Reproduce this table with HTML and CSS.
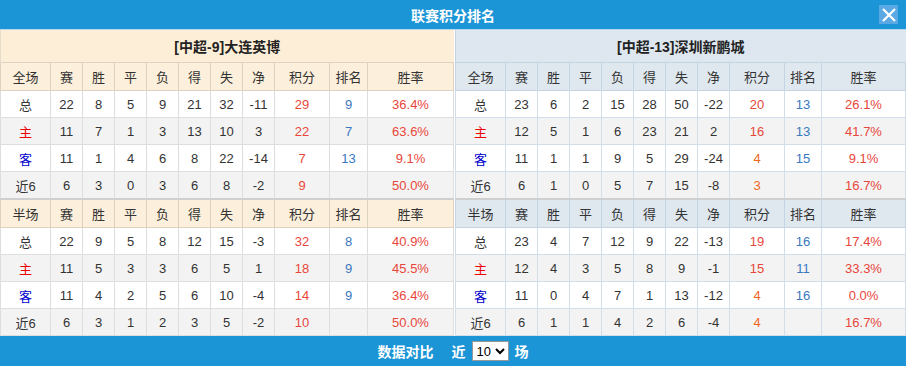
FILE: index.html
```html
<!DOCTYPE html>
<html lang="zh-CN">

<head>
    <meta charset="UTF-8">
    <title>联赛积分排名</title>
    <link rel="stylesheet" href="styles.css">
</head>

<body>
    <div class="dialog">
        <div class="dlg-head">
            <span class="dlg-title">联赛积分排名</span>
            <a class="dlg-close" href="#">
                <svg width="14" height="14" viewBox="0 0 14 14">
                    <path d="M1 1 L13 13 M13 1 L1 13" stroke="#fff" stroke-width="2.2" />
                </svg>
            </a>
        </div>

        <div class="teams">
            <table class="standings home">
                <colgroup>
                    <col style="width:50px"><col style="width:32px"><col style="width:32px"><col style="width:32px">
                    <col style="width:32px"><col style="width:32px"><col style="width:32px"><col style="width:32px">
                    <col style="width:55px"><col style="width:38px"><col>
                </colgroup>
                <tr class="team-row"><th colspan="11">[中超-9]大连英博</th></tr>
                <tr class="head-row">
                    <td>全场</td><td>赛</td><td>胜</td><td>平</td><td>负</td><td>得</td><td>失</td><td>净</td><td>积分</td><td>排名</td><td>胜率</td>
                </tr>
                <tr><td>总</td><td>22</td><td>8</td><td>5</td><td>9</td><td>21</td><td>32</td><td>-11</td><td class="pt">29</td><td class="rk">9</td><td class="rate">36.4%</td></tr>
                <tr class="alt"><td class="zhu">主</td><td>11</td><td>7</td><td>1</td><td>3</td><td>13</td><td>10</td><td>3</td><td class="pt">22</td><td class="rk">7</td><td class="rate">63.6%</td></tr>
                <tr><td class="ke">客</td><td>11</td><td>1</td><td>4</td><td>6</td><td>8</td><td>22</td><td>-14</td><td class="pt">7</td><td class="rk">13</td><td class="rate">9.1%</td></tr>
                <tr class="alt"><td>近6</td><td>6</td><td>3</td><td>0</td><td>3</td><td>6</td><td>8</td><td>-2</td><td class="pt">9</td><td class="rk"></td><td class="rate">50.0%</td></tr>
                <tr class="head-row half">
                    <td>半场</td><td>赛</td><td>胜</td><td>平</td><td>负</td><td>得</td><td>失</td><td>净</td><td>积分</td><td>排名</td><td>胜率</td>
                </tr>
                <tr><td>总</td><td>22</td><td>9</td><td>5</td><td>8</td><td>12</td><td>15</td><td>-3</td><td class="pt">32</td><td class="rk">8</td><td class="rate">40.9%</td></tr>
                <tr class="alt"><td class="zhu">主</td><td>11</td><td>5</td><td>3</td><td>3</td><td>6</td><td>5</td><td>1</td><td class="pt">18</td><td class="rk">9</td><td class="rate">45.5%</td></tr>
                <tr><td class="ke">客</td><td>11</td><td>4</td><td>2</td><td>5</td><td>6</td><td>10</td><td>-4</td><td class="pt">14</td><td class="rk">9</td><td class="rate">36.4%</td></tr>
                <tr class="alt"><td>近6</td><td>6</td><td>3</td><td>1</td><td>2</td><td>3</td><td>5</td><td>-2</td><td class="pt">10</td><td class="rk"></td><td class="rate">50.0%</td></tr>
            </table>

            <table class="standings away">
                <colgroup>
                    <col style="width:50px"><col style="width:32px"><col style="width:32px"><col style="width:32px">
                    <col style="width:32px"><col style="width:32px"><col style="width:32px"><col style="width:32px">
                    <col style="width:55px"><col style="width:37px"><col>
                </colgroup>
                <tr class="team-row"><th colspan="11">[中超-13]深圳新鹏城</th></tr>
                <tr class="head-row">
                    <td>全场</td><td>赛</td><td>胜</td><td>平</td><td>负</td><td>得</td><td>失</td><td>净</td><td>积分</td><td>排名</td><td>胜率</td>
                </tr>
                <tr><td>总</td><td>23</td><td>6</td><td>2</td><td>15</td><td>28</td><td>50</td><td>-22</td><td class="pt">20</td><td class="rk">13</td><td class="rate">26.1%</td></tr>
                <tr class="alt"><td class="zhu">主</td><td>12</td><td>5</td><td>1</td><td>6</td><td>23</td><td>21</td><td>2</td><td class="pt">16</td><td class="rk">13</td><td class="rate">41.7%</td></tr>
                <tr><td class="ke">客</td><td>11</td><td>1</td><td>1</td><td>9</td><td>5</td><td>29</td><td>-24</td><td class="pt low">4</td><td class="rk">15</td><td class="rate">9.1%</td></tr>
                <tr class="alt"><td>近6</td><td>6</td><td>1</td><td>0</td><td>5</td><td>7</td><td>15</td><td>-8</td><td class="pt low">3</td><td class="rk"></td><td class="rate">16.7%</td></tr>
                <tr class="head-row half">
                    <td>半场</td><td>赛</td><td>胜</td><td>平</td><td>负</td><td>得</td><td>失</td><td>净</td><td>积分</td><td>排名</td><td>胜率</td>
                </tr>
                <tr><td>总</td><td>23</td><td>4</td><td>7</td><td>12</td><td>9</td><td>22</td><td>-13</td><td class="pt">19</td><td class="rk">16</td><td class="rate">17.4%</td></tr>
                <tr class="alt"><td class="zhu">主</td><td>12</td><td>4</td><td>3</td><td>5</td><td>8</td><td>9</td><td>-1</td><td class="pt">15</td><td class="rk">11</td><td class="rate">33.3%</td></tr>
                <tr><td class="ke">客</td><td>11</td><td>0</td><td>4</td><td>7</td><td>1</td><td>13</td><td>-12</td><td class="pt low">4</td><td class="rk">16</td><td class="rate">0.0%</td></tr>
                <tr class="alt"><td>近6</td><td>6</td><td>1</td><td>1</td><td>4</td><td>2</td><td>6</td><td>-4</td><td class="pt low">4</td><td class="rk"></td><td class="rate">16.7%</td></tr>
            </table>
        </div>

        <div class="dlg-foot">
            <span>数据对比</span>
            <span class="near">近</span>
            <select class="count">
                <option>10</option>
            </select>
            <span>场</span>
        </div>
    </div>
</body>

</html>
```

FILE: styles.css
```css
body {
    margin: 0;
    padding: 0;
    font-family: "Liberation Sans", "Noto Sans CJK SC", sans-serif;
    font-size: 13px;
    color: #333;
    background-color: #fff;
}

.dialog {
    width: 906px;
    height: 366px;
    overflow: hidden;
}

.dlg-head {
    height: 29px;
    border-bottom: 1px solid #b9d7ec;
    background-color: #1c95d6;
    display: flex;
    justify-content: center;
    align-items: center;
    position: relative;
}

.dlg-title {
    color: white;
    font-weight: bold;
    font-size: 14px;
}

.dlg-close {
    position: absolute;
    right: 8px;
    top: 5px;
    width: 19px;
    height: 19px;
    background-color: #5aa8e4;
    display: flex;
    justify-content: center;
    align-items: center;
}

.teams {
    display: grid;
    grid-template-columns: 454px 451px;
    gap: 1px;
}

.standings {
    border-collapse: collapse;
    table-layout: fixed;
    width: 100%;
}

.standings td,
.standings th {
    padding: 0;
    text-align: center;
    height: 26px;
    white-space: nowrap;
}

.standings td {
    border: 1px solid #dedede;
}

.standings .team-row th {
    height: 32px;
    font-size: 14px;
    font-weight: bold;
    color: #222;
}

.home .team-row th {
    background-color: #fdefd7;
    border-left: 1px solid #e6dccb;
}

.away .team-row th {
    background-color: #dee7ef;
    border-left: 1px solid #c3d3e0;
}

.standings .head-row td {
    height: 27px;
}

.home .head-row td {
    background-color: #fcefdb;
    border-color: #ddd2c1;
}

.away .head-row td {
    background-color: #dfe7ef;
    border-color: #c4d4e2;
}

.standings .half td {
    border-top: 2px solid #cfcfcf;
}

.away td {
    border-color: #d2dfea;
}

.standings tr.alt td {
    background-color: #f3f3f3;
}

.zhu {
    color: #e00;
}

.ke {
    color: #00c;
}

.pt {
    color: #e8463a;
}

.pt.low {
    color: #f2661e;
}

.rk {
    color: #3a78bf;
}

.rate {
    color: #e8463a;
}

.dlg-foot {
    height: 30px;
    background-color: #1c95d6;
    display: flex;
    justify-content: center;
    align-items: center;
    color: white;
    font-weight: bold;
    font-size: 14px;
}

.near {
    margin-left: 18px;
    margin-right: 6px;
}

.count {
    height: 20px;
    font-size: 13px;
    font-family: "Liberation Sans", sans-serif;
    margin-right: 6px;
    border: 1px solid #999;
    background-color: white;
}
```
